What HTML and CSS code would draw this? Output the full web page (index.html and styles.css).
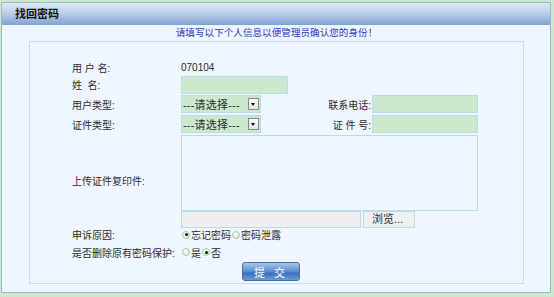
FILE: index.html
```html
<!DOCTYPE html>
<html lang="zh-CN">
<head>
    <meta charset="UTF-8">
    <title>找回密码</title>
    <link rel="stylesheet" href="styles.css">
</head>
<body>

    <div class="panel">
        <div class="panel-head">找回密码</div>
        <div class="panel-body">
            <p class="tip">请填写以下个人信息以便管理员确认您的身份！</p>

            <div class="box">
                <div class="form">
                    <div class="lbl">用 户 名:</div>
                    <div class="val wide">070104</div>

                    <div class="lbl">姓&nbsp;&nbsp;名:</div>
                    <div class="val wide"><span class="input name"></span></div>

                    <div class="lbl">用户类型:</div>
                    <div class="val">
                        <span class="select">---请选择---<i class="arrow"></i></span>
                    </div>
                    <div class="lbl2">联系电话:</div>
                    <div class="val"><span class="input phone"></span></div>

                    <div class="lbl">证件类型:</div>
                    <div class="val">
                        <span class="select">---请选择---<i class="arrow"></i></span>
                    </div>
                    <div class="lbl2">证 件 号:</div>
                    <div class="val"><span class="input phone"></span></div>

                    <div class="lbl">上传证件复印件:</div>
                    <div class="upload">
                        <div class="area"></div>
                        <div class="file">
                            <span class="file-box"></span>
                            <span class="file-btn">浏览...</span>
                        </div>
                    </div>

                    <div class="lbl radio-row">申诉原因:</div>
                    <div class="val wide radio-row">
                        <span class="radio on"></span>忘记密码<span class="radio"></span>密码泄露
                    </div>

                    <div class="lbl radio-row">是否删除原有密码保护:</div>
                    <div class="val wide radio-row">
                        <span class="radio"></span>是<span class="radio on"></span>否
                    </div>
                </div>

                <div class="actions">
                    <button class="submit">提 交</button>
                </div>
            </div>
        </div>
    </div>

</body>
</html>
```

FILE: styles.css
```css
body {
    margin: 0;
    padding: 2px 3px 0 1px;
    background: #cde8cd;
    font-family: "Liberation Sans", "Noto Sans CJK SC", sans-serif;
    font-size: 10px;
    color: #2b2b2b;
}

.panel {
    border: 1px solid #9fb6cb;
    background: #f0f6ff;
    height: 291px;
    box-sizing: border-box;
}

.panel-head {
    height: 22px;
    line-height: 22px;
    padding-left: 13px;
    font-size: 11px;
    font-weight: bold;
    color: #111;
    background: linear-gradient(#dfe9f6, #b7cbe6 50%, #7ea3d0);
}

.panel-body {
    padding: 0 26px 0 27px;
}

.tip {
    margin: 0;
    height: 16px;
    line-height: 16px;
    text-align: center;
    font-size: 9.6px;
    color: #2a36c8;
}

.box {
    border: 1px solid #c0e0f0;
    height: 243px;
    box-sizing: border-box;
    padding: 17px 0 0 42px;
}

.form {
    display: grid;
    grid-template-columns: 109px 120px 71px 107px;
    grid-template-rows: 16px 19px 20px 20px 92px 17px 18px;
    align-items: center;
}

.val.wide {
    grid-column: 2 / 5;
}

.lbl2 {
    text-align: right;
    padding-right: 1px;
}

.input {
    display: block;
    height: 18px;
    box-sizing: border-box;
    background: #cde8cd;
    border: 1px solid #b8dcef;
}

.input.name {
    width: 107px;
}

.input.phone {
    width: 106px;
}

.select {
    display: flex;
    align-items: center;
    width: 80px;
    height: 18px;
    box-sizing: border-box;
    padding-left: 1px;
    background: #cde8cd;
    border: 1px solid #b8dcef;
    font-size: 11px;
    letter-spacing: 0.2px;
}

.arrow {
    margin-left: auto;
    margin-right: 1px;
    width: 11px;
    height: 12px;
    box-sizing: border-box;
    border: 1px solid #8a8a8a;
    background: linear-gradient(#ffffff, #e4e4e4);
    position: relative;
}

.arrow::after {
    content: "";
    position: absolute;
    left: 2px;
    top: 4px;
    border-left: 2.5px solid transparent;
    border-right: 2.5px solid transparent;
    border-top: 3px solid #111;
}

.upload {
    grid-column: 2 / 5;
    align-self: start;
    padding-top: 1px;
}

.area {
    width: 297px;
    height: 76px;
    box-sizing: border-box;
    border: 1px solid #b8dcef;
}

.file {
    display: flex;
    gap: 2px;
}

.file-box {
    width: 180px;
    height: 17px;
    box-sizing: border-box;
    background: #efefef;
    border: 1px solid #b8dcef;
}

.file-btn {
    width: 52px;
    height: 17px;
    box-sizing: border-box;
    border: 1px solid #b8dcef;
    background: #f0f0f0;
    line-height: 15px;
    padding-left: 8px;
    font-size: 11px;
}

.radio-row {
    display: flex;
    align-items: center;
}

.radio {
    display: inline-block;
    width: 8px;
    height: 8px;
    margin: 0 1px 0 1px;
    border-radius: 50%;
    box-sizing: border-box;
    border: 1px solid #a8c8a8;
    background: radial-gradient(circle at 35% 35%, #ffffff, #c8e4c8);
    position: relative;
}

.radio.on::after {
    content: "";
    position: absolute;
    left: 1.5px;
    top: 1.5px;
    width: 3px;
    height: 3px;
    border-radius: 50%;
    background: #000;
}

.actions {
    padding: 1px 0 0 170px;
}

.submit {
    width: 58px;
    height: 19px;
    padding: 0;
    border: 1px solid #3e6fae;
    border-radius: 3px;
    background: linear-gradient(#a9c5ec, #5a8cd0 50%, #3b6fc0 60%, #6c9ad8);
    color: #fff;
    font-family: "Liberation Sans", "Noto Sans CJK SC", sans-serif;
    font-size: 11px;
    letter-spacing: 3px;
}
```
